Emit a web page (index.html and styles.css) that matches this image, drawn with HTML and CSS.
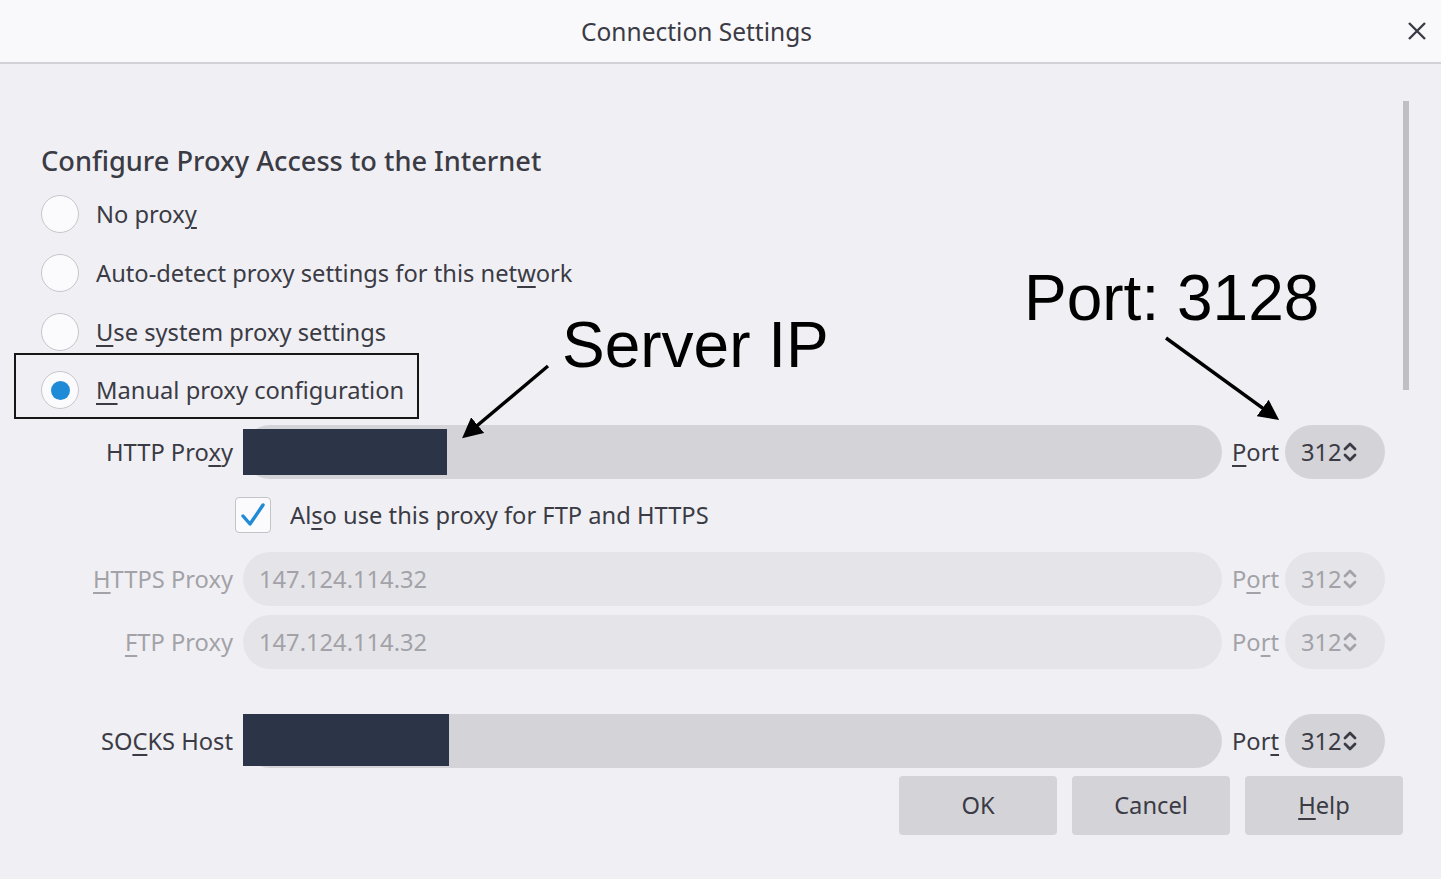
FILE: index.html
```html
<!DOCTYPE html>
<html lang="en">
<head>
<meta charset="utf-8">
<title>Connection Settings</title>
<link rel="stylesheet" href="styles.css">
</head>
<body>
<div class="dialog">
  <header class="titlebar">
    <div class="title">Connection Settings</div>
    <button class="close" aria-label="Close">
      <svg width="18" height="18" viewBox="0 0 18 18"><path d="M1 1 L17 17 M17 1 L1 17" stroke="#3b3b45" stroke-width="2.4" fill="none"/></svg>
    </button>
  </header>

  <main class="content">
    <h1 class="heading">Configure Proxy Access to the Internet</h1>

    <div class="radios">
      <label class="radio-row"><span class="radio"></span><span>No prox<u>y</u></span></label>
      <label class="radio-row"><span class="radio"></span><span>Auto-detect proxy settings for this net<u>w</u>ork</span></label>
      <label class="radio-row"><span class="radio"></span><span><u>U</u>se system proxy settings</span></label>
      <label class="radio-row boxed"><span class="radio checked"></span><span><u>M</u>anual proxy configuration</span></label>
    </div>

    <div class="row row-http">
      <span class="row-label">HTTP Pro<u>x</u>y</span>
      <div class="field"><span class="redact"></span></div>
      <span class="port-label"><u>P</u>ort</span>
      <div class="port">312<svg class="spin" width="14" height="22" viewBox="0 0 14 22"><path d="M2 8 L7 3 L12 8 M2 14 L7 19 L12 14" stroke="currentColor" stroke-width="2.8" fill="none" stroke-linecap="round" stroke-linejoin="round"/></svg></div>
    </div>

    <label class="check-row">
      <span class="checkbox"><svg width="28" height="28" viewBox="0 0 28 28"><path d="M4 15 L11 23 L24 4" stroke="#1f8ad6" stroke-width="3.4" fill="none" stroke-linecap="round" stroke-linejoin="round"/></svg></span>
      <span>Al<u>s</u>o use this proxy for FTP and HTTPS</span>
    </label>

    <div class="row row-https disabled">
      <span class="row-label"><u>H</u>TTPS Proxy</span>
      <div class="field">147.124.114.32</div>
      <span class="port-label">P<u>o</u>rt</span>
      <div class="port">312<svg class="spin" width="14" height="22" viewBox="0 0 14 22"><path d="M2 8 L7 3 L12 8 M2 14 L7 19 L12 14" stroke="currentColor" stroke-width="2.8" fill="none" stroke-linecap="round" stroke-linejoin="round"/></svg></div>
    </div>

    <div class="row row-ftp disabled">
      <span class="row-label"><u>F</u>TP Proxy</span>
      <div class="field">147.124.114.32</div>
      <span class="port-label">Po<u>r</u>t</span>
      <div class="port">312<svg class="spin" width="14" height="22" viewBox="0 0 14 22"><path d="M2 8 L7 3 L12 8 M2 14 L7 19 L12 14" stroke="currentColor" stroke-width="2.8" fill="none" stroke-linecap="round" stroke-linejoin="round"/></svg></div>
    </div>

    <div class="row row-socks">
      <span class="row-label">SO<u>C</u>KS Host</span>
      <div class="field"><span class="redact redact-socks"></span></div>
      <span class="port-label">Por<u>t</u></span>
      <div class="port">312<svg class="spin" width="14" height="22" viewBox="0 0 14 22"><path d="M2 8 L7 3 L12 8 M2 14 L7 19 L12 14" stroke="currentColor" stroke-width="2.8" fill="none" stroke-linecap="round" stroke-linejoin="round"/></svg></div>
    </div>

    <div class="buttons">
      <button class="btn">OK</button>
      <button class="btn">Cancel</button>
      <button class="btn"><u>H</u>elp</button>
    </div>
  </main>

  <div class="scroll-thumb"></div>

  <div class="note note-ip">Server IP</div>
  <div class="note note-port">Port: 3128</div>
  <svg class="arrows" width="1441" height="879" viewBox="0 0 1441 879">
    <defs>
      <marker id="head" markerWidth="6" markerHeight="6" refX="4.5" refY="3" orient="auto" markerUnits="strokeWidth">
        <path d="M0 0 L6 3 L0 6 Z" fill="#000"/>
      </marker>
    </defs>
    <line x1="548" y1="366" x2="466" y2="435" stroke="#000" stroke-width="3.4" marker-end="url(#head)"/>
    <line x1="1166" y1="338" x2="1275" y2="417" stroke="#000" stroke-width="3.4" marker-end="url(#head)"/>
  </svg>
</div>
</body>
</html>
```

FILE: styles.css
```css
* { box-sizing: border-box; }

html, body {
  margin: 0;
  padding: 0;
}

body {
  width: 1441px;
  height: 879px;
  overflow: hidden;
  background: #f0f0f4;
  font-family: "Noto Sans", "Open Sans", sans-serif;
  font-size: 23.7px;
  color: #3b3b45;
}

u {
  text-decoration-thickness: 2px;
  text-underline-offset: 4px;
}

.dialog {
  position: relative;
  width: 1441px;
  height: 879px;
}

.titlebar {
  height: 64px;
  display: flex;
  align-items: center;
  background: #f9f9fb;
  border-bottom: 2px solid #d2d2d6;
}

.title {
  flex: 1;
  text-align: center;
  font-size: 24.5px;
  color: #3b3b45;
}

.close {
  width: 48px;
  height: 62px;
  border: 0;
  padding: 0;
  background: transparent;
  display: flex;
  align-items: center;
  justify-content: center;
}

.content {
  padding: 79px 38px 0 41px;
}

.heading {
  margin: 0;
  font-size: 27.2px;
  line-height: 36px;
  font-weight: 500;
  color: #3b3b45;
}

.radios {
  margin-top: 6px;
}

.radio-row {
  display: flex;
  align-items: center;
  gap: 17px;
  height: 58.67px;
}

.radio {
  width: 38px;
  height: 38px;
  border-radius: 50%;
  background: #fbfbfd;
  border: 1px solid #c6c6cb;
  display: flex;
  align-items: center;
  justify-content: center;
  flex: none;
}

.radio.checked::after {
  content: "";
  width: 19px;
  height: 19px;
  border-radius: 50%;
  background: #1f8ad6;
}

.boxed {
  position: relative;
}

.boxed::before {
  content: "";
  position: absolute;
  left: -27px;
  top: -8px;
  width: 401px;
  height: 62px;
  border: 2px solid #161616;
}

.row {
  display: flex;
  align-items: center;
  gap: 10px;
}

.row-http { margin-top: 5px; }
.row-https { margin-top: 0; }
.row-ftp { margin-top: 9px; }
.row-socks { margin-top: 45px; }

.row-label {
  width: 192px;
  text-align: right;
  white-space: nowrap;
}

.field {
  width: 979px;
  height: 54px;
  border-radius: 27px;
  background: #d4d4d8;
  display: flex;
  align-items: center;
  padding-left: 16px;
}

.redact {
  width: 204px;
  height: 46px;
  margin-left: -16px;
  background: #2c3447;
}

.redact-socks {
  width: 206px;
  height: 52px;
  margin-top: -2px;
}

.port-label {
  width: 43px;
  white-space: nowrap;
}

.port {
  width: 100px;
  height: 54px;
  border-radius: 27px;
  background: #d4d4d8;
  display: flex;
  align-items: center;
  padding-left: 16px;
  gap: 1px;
  color: #3b3b45;
}

.spin {
  flex: none;
}

.disabled .row-label,
.disabled .port-label,
.disabled .field,
.disabled .port {
  color: #a2a2a8;
}

.disabled .field,
.disabled .port {
  background: #e5e5e9;
}

.check-row {
  display: flex;
  align-items: center;
  gap: 19px;
  height: 73px;
  padding-left: 194px;
}

.checkbox {
  width: 36px;
  height: 36px;
  border: 1px solid #c3c3c8;
  border-radius: 4px;
  background: #fbfbfd;
  display: flex;
  align-items: center;
  justify-content: center;
  flex: none;
}

.buttons {
  display: flex;
  justify-content: flex-end;
  gap: 15px;
  margin-top: 8px;
}

.btn {
  width: 158px;
  height: 59px;
  border: 0;
  border-radius: 4px;
  background: #d4d4d8;
  font-family: inherit;
  font-size: 23.7px;
  color: #3b3b45;
  padding: 0;
}

.scroll-thumb {
  position: absolute;
  left: 1403px;
  top: 101px;
  width: 6px;
  height: 289px;
  background: #c0c0c4;
}

.note {
  position: absolute;
  font-family: "Liberation Sans", Arial, sans-serif;
  font-size: 64px;
  line-height: 64px;
  color: #000;
  white-space: nowrap;
}

.note-ip {
  left: 562px;
  top: 313px;
}

.note-port {
  left: 1024px;
  top: 266px;
}

.arrows {
  position: absolute;
  left: 0;
  top: 0;
  pointer-events: none;
}
```
